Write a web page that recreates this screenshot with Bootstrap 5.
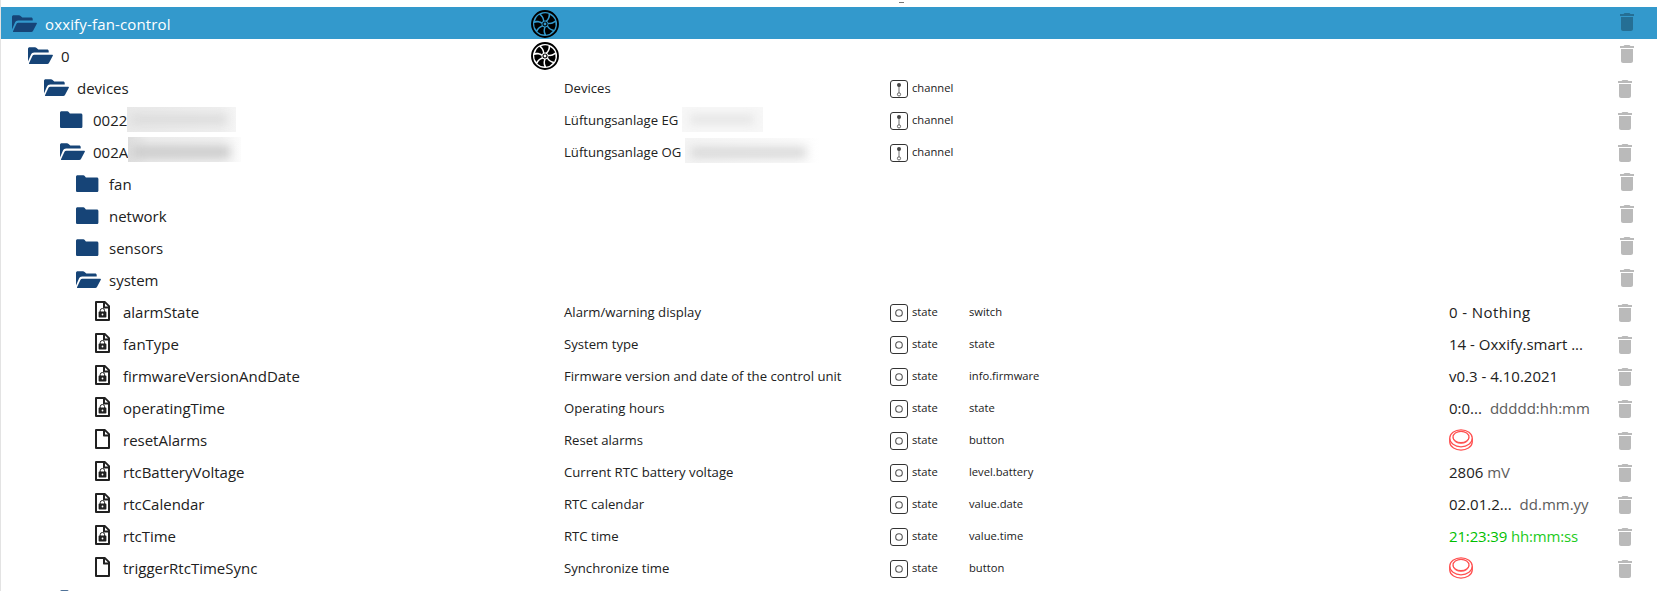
<!DOCTYPE html>
<html lang="en">
<head>
<meta charset="utf-8">
<meta name="viewport" content="width=device-width, initial-scale=1">
<title>Objects</title>
<link href="https://cdn.jsdelivr.net/npm/bootstrap@5.3.0/dist/css/bootstrap.min.css" rel="stylesheet">
<style>
  body { font-family: "Open Sans", "Noto Sans", sans-serif; color: #212121; background: #fff; overflow: hidden; }
  .tree { height: 591px; border-left: 1px solid #e3e3e3; }
  .tree-top { height: 7px; padding: 2px 0 0 898px; }
  .tree-top span { width: 5px; height: 1px; background: #777; }
  .item { height: 32px; line-height: 34px; white-space: nowrap; }
  .item.selected { background: #3399cc; color: #fff; }
  .selected .c-name { letter-spacing: .15px; }
  .item svg { flex: none; display: block; }
  .c-name { width: 530px; font-size: 15px; }
  .c-icon { width: 33px; color: #000; }
  .c-desc { width: 326px; font-size: 13.15px; }
  .c-type { width: 79px; font-size: 11.2px; line-height: 33px; }
  .c-role { width: 480px; font-size: 11.2px; line-height: 33px; }
  .c-value { width: 163px; font-size: 15px; }
  .v-wide { letter-spacing: .4px; }
  .unit { color: #5c5c5c; }
  .fresh, .fresh .unit { color: #00c000; letter-spacing: -.15px; }
  .fresh .unit { color: #22cb22; }
  .lv0 { padding-left: 10px; } .lv1 { padding-left: 26px; } .lv2 { padding-left: 42px; }
  .lv3 { padding-left: 58px; } .lv4 { padding-left: 74px; }
  .lv5 { padding-left: 94px; }
  .folder { width: 26px; height: 18px; margin: 8px 8px 0 0; color: #164477; }
  .doc { width: 15px; height: 20px; margin: 6px 13px 0 0; }
  .fan { width: 28px; height: 28px; margin-top: 3px; }
  .kind { width: 18px; height: 18px; margin: 9px 4px 0 0; }
  .push { width: 24px; height: 22px; margin-top: 6px; }
  .bin { width: 24px; height: 24px; margin: 3px 0 0 3px; color: rgba(0,0,0,.27); }
  .bin.obj { margin: 6px 0 0 1px; }
  .redact { height: 25px; overflow: hidden; }
  .redact i { display: block; filter: blur(5px); }
  .r1 { width: 109px; margin-top: 4px; background: linear-gradient(90deg, #e9e9e9, #efefef 85%, #f5f5f5); }
  .r1 i { width: 96px; height: 9px; margin: 8px 0 0 4px; background: #dadada; }
  .r2 { width: 113px; margin-top: 2px; background: linear-gradient(90deg, #dedede, #ececec 20%, #f0f0f0 80%, #fcfcfc); }
  .r2 i { width: 98px; height: 12px; margin: 9px 0 0 4px; background: #cccccc; }
  .r3 { width: 81px; margin: 4px 0 0 4px; background: #f7f7f7; }
  .r3 i { width: 64px; height: 9px; margin: 8px 0 0 8px; background: #e4e4e4; }
  .r4 { width: 135px; margin: 3px 0 0 4px; background: linear-gradient(90deg, #f4f4f4, #fafafa 80%, #fff); }
  .r4 i { width: 115px; height: 11px; margin: 9px 0 0 6px; background: #d9d9d9; }
</style>
</head>
<body>
<svg class="d-none" xmlns="http://www.w3.org/2000/svg">
  <symbol id="closed" viewBox="0 0 26 18"><path fill="currentColor" d="M2.600.2h5.700c.7 0 1 .2 1.400.7l1.200 1.500h10.900c1 0 1.600.6 1.600 1.600v11.400c0 1-.6 1.600-1.600 1.600H2.600c-1 0-1.600-.6-1.600-1.600V1.800C1 .8 1.600.2 2.600.2z"/></symbol>
  <symbol id="open" viewBox="0 0 26 18"><path fill="currentColor" d="M2.700.2h5.200c.7 0 1.200.2 1.700.7l1.700 1.600h8.700c1.100 0 1.700.6 1.700 1.600v1.500H7.100c-1.500 0-2.500.7-3.100 2L1 14.400V1.800C1 .8 1.700.2 2.700.2z"/><path fill="currentColor" d="M7.300 7.700h18c.6 0 .8.400.5 1l-3.700 7.100c-.4.8-1 1.200-1.900 1.200H2.700c-.6 0-.9-.4-.6-1l3.400-7.200c.4-.7 1-1.100 1.800-1.100z"/></symbol>
  <symbol id="file" viewBox="0 0 15 20"><path fill="none" stroke="currentColor" stroke-width="2" stroke-linejoin="round" d="M1 1h8.700L14 5.300V19H1z"/><path fill="currentColor" d="M8 1H10l4.500 4.500v1.900H9c-.6 0-1-.4-1-1z"/><path fill="#fff" d="M10 2.400v3.100h3.100z"/></symbol>
  <symbol id="locked" viewBox="0 0 15 20"><use href="#file"/><path fill="none" stroke="currentColor" stroke-width="1" d="M5.200 11V9.700a2.200 2.200 0 0 1 4.400 0V11"/><rect x="3.600" y="10.600" width="7.800" height="6" rx=".8" fill="currentColor"/><circle cx="7.500" cy="13.500" r=".9" fill="#fff"/></symbol>
  <symbol id="rotor" viewBox="-14 -14 28 28"><circle r="13" fill="none" stroke="currentColor" stroke-width="1.900"/>
    <g fill="currentColor"><path id="blade" d="M-.7-3.500C-.9-5.800-1.900-7.900-3.900-9.700Q-.2-11.500 3.500-10.300C3.800-7.600 2.900-5 1-3.400z"/>
    <use href="#blade" transform="rotate(51.430)"/><use href="#blade" transform="rotate(102.860)"/><use href="#blade" transform="rotate(154.290)"/><use href="#blade" transform="rotate(205.710)"/><use href="#blade" transform="rotate(257.140)"/><use href="#blade" transform="rotate(308.570)"/></g>
    <circle r="2" fill="none" stroke="currentColor" stroke-width="1.200"/></symbol>
  <symbol id="channel" viewBox="0 0 18 18"><rect x=".5" y=".5" width="17" height="17" rx="2.500" fill="none" stroke="#333"/><path stroke="#888" stroke-width="1.200" d="M9 5v8"/><circle cx="9" cy="4.900" r="2" fill="#444"/><circle cx="9" cy="14.400" r="1.600" fill="#fff" stroke="#666"/></symbol>
  <symbol id="state" viewBox="0 0 18 18"><rect x=".5" y=".5" width="17" height="17" rx="2.500" fill="none" stroke="#333"/><circle cx="9" cy="9" r="3.300" fill="none" stroke="#555" stroke-width="1.100"/></symbol>
  <symbol id="button" viewBox="0 0 24 22"><g fill="none" stroke="#ff5050" stroke-width="1.200"><ellipse cx="12" cy="9.300" rx="11.300" ry="8.500"/><ellipse cx="12" cy="8" rx="8" ry="5.700"/><path d="M.7 9.300v3.800c1.200 10.600 21.400 10.600 22.600 0V9.300M4 8.500c1 7.600 15 7.600 16 0"/></g></symbol>
  <symbol id="trash" viewBox="0 0 24 24"><path fill="currentColor" d="M6 19c0 1.100.9 2 2 2h8c1.100 0 2-.9 2-2V7H6v12zM19 4h-3.500l-1-1h-5l-1 1H5v2h14V4z"/></symbol>
</svg>

<main class="tree">
  <div class="tree-top"><span class="d-block"></span></div>

  <div class="item selected d-flex"><div class="c-name lv0 d-flex"><svg class="folder"><use href="#open"/></svg>oxxify-fan-control</div><div class="c-icon"><svg class="fan"><use href="#rotor"/></svg></div><div class="c-desc"></div><div class="c-type"></div><div class="c-role"></div><div class="c-value"></div><svg class="bin"><use href="#trash"/></svg></div>
  <div class="item d-flex"><div class="c-name lv1 d-flex"><svg class="folder"><use href="#open"/></svg>0</div><div class="c-icon"><svg class="fan"><use href="#rotor"/></svg></div><div class="c-desc"></div><div class="c-type"></div><div class="c-role"></div><div class="c-value"></div><svg class="bin"><use href="#trash"/></svg></div>
  <div class="item d-flex"><div class="c-name lv2 d-flex"><svg class="folder"><use href="#open"/></svg>devices</div><div class="c-icon"></div><div class="c-desc">Devices</div><div class="c-type d-flex"><svg class="kind"><use href="#channel"/></svg>channel</div><div class="c-role"></div><div class="c-value"></div><svg class="bin obj"><use href="#trash"/></svg></div>
  <div class="item d-flex"><div class="c-name lv3 d-flex"><svg class="folder"><use href="#closed"/></svg>0022<span class="redact r1"><i></i></span></div><div class="c-icon"></div><div class="c-desc d-flex">Lüftungsanlage EG<span class="redact r3"><i></i></span></div><div class="c-type d-flex"><svg class="kind"><use href="#channel"/></svg>channel</div><div class="c-role"></div><div class="c-value"></div><svg class="bin obj"><use href="#trash"/></svg></div>
  <div class="item d-flex"><div class="c-name lv3 d-flex"><svg class="folder"><use href="#open"/></svg>002A<span class="redact r2"><i></i></span></div><div class="c-icon"></div><div class="c-desc d-flex">Lüftungsanlage OG<span class="redact r4"><i></i></span></div><div class="c-type d-flex"><svg class="kind"><use href="#channel"/></svg>channel</div><div class="c-role"></div><div class="c-value"></div><svg class="bin obj"><use href="#trash"/></svg></div>
  <div class="item d-flex"><div class="c-name lv4 d-flex"><svg class="folder"><use href="#closed"/></svg>fan</div><div class="c-icon"></div><div class="c-desc"></div><div class="c-type"></div><div class="c-role"></div><div class="c-value"></div><svg class="bin"><use href="#trash"/></svg></div>
  <div class="item d-flex"><div class="c-name lv4 d-flex"><svg class="folder"><use href="#closed"/></svg>network</div><div class="c-icon"></div><div class="c-desc"></div><div class="c-type"></div><div class="c-role"></div><div class="c-value"></div><svg class="bin"><use href="#trash"/></svg></div>
  <div class="item d-flex"><div class="c-name lv4 d-flex"><svg class="folder"><use href="#closed"/></svg>sensors</div><div class="c-icon"></div><div class="c-desc"></div><div class="c-type"></div><div class="c-role"></div><div class="c-value"></div><svg class="bin"><use href="#trash"/></svg></div>
  <div class="item d-flex"><div class="c-name lv4 d-flex"><svg class="folder"><use href="#open"/></svg>system</div><div class="c-icon"></div><div class="c-desc"></div><div class="c-type"></div><div class="c-role"></div><div class="c-value"></div><svg class="bin"><use href="#trash"/></svg></div>

  <div class="item d-flex"><div class="c-name lv5 d-flex"><svg class="doc"><use href="#locked"/></svg>alarmState</div><div class="c-icon"></div><div class="c-desc">Alarm/warning display</div><div class="c-type d-flex"><svg class="kind"><use href="#state"/></svg>state</div><div class="c-role">switch</div><div class="c-value v-wide">0 - Nothing</div><svg class="bin obj"><use href="#trash"/></svg></div>
  <div class="item d-flex"><div class="c-name lv5 d-flex"><svg class="doc"><use href="#locked"/></svg>fanType</div><div class="c-icon"></div><div class="c-desc">System type</div><div class="c-type d-flex"><svg class="kind"><use href="#state"/></svg>state</div><div class="c-role">state</div><div class="c-value">14 - Oxxify.smart ...</div><svg class="bin obj"><use href="#trash"/></svg></div>
  <div class="item d-flex"><div class="c-name lv5 d-flex"><svg class="doc"><use href="#locked"/></svg>firmwareVersionAndDate</div><div class="c-icon"></div><div class="c-desc">Firmware version and date of the control unit</div><div class="c-type d-flex"><svg class="kind"><use href="#state"/></svg>state</div><div class="c-role">info.firmware</div><div class="c-value">v0.3 - 4.10.2021</div><svg class="bin obj"><use href="#trash"/></svg></div>
  <div class="item d-flex"><div class="c-name lv5 d-flex"><svg class="doc"><use href="#locked"/></svg>operatingTime</div><div class="c-icon"></div><div class="c-desc">Operating hours</div><div class="c-type d-flex"><svg class="kind"><use href="#state"/></svg>state</div><div class="c-role">state</div><div class="c-value d-flex gap-2">0:0...<span class="unit">ddddd:hh:mm</span></div><svg class="bin obj"><use href="#trash"/></svg></div>
  <div class="item d-flex"><div class="c-name lv5 d-flex"><svg class="doc"><use href="#file"/></svg>resetAlarms</div><div class="c-icon"></div><div class="c-desc">Reset alarms</div><div class="c-type d-flex"><svg class="kind"><use href="#state"/></svg>state</div><div class="c-role">button</div><div class="c-value"><svg class="push"><use href="#button"/></svg></div><svg class="bin obj"><use href="#trash"/></svg></div>
  <div class="item d-flex"><div class="c-name lv5 d-flex"><svg class="doc"><use href="#locked"/></svg>rtcBatteryVoltage</div><div class="c-icon"></div><div class="c-desc">Current RTC battery voltage</div><div class="c-type d-flex"><svg class="kind"><use href="#state"/></svg>state</div><div class="c-role">level.battery</div><div class="c-value">2806 <span class="unit">mV</span></div><svg class="bin obj"><use href="#trash"/></svg></div>
  <div class="item d-flex"><div class="c-name lv5 d-flex"><svg class="doc"><use href="#locked"/></svg>rtcCalendar</div><div class="c-icon"></div><div class="c-desc">RTC calendar</div><div class="c-type d-flex"><svg class="kind"><use href="#state"/></svg>state</div><div class="c-role">value.date</div><div class="c-value d-flex gap-2">02.01.2...<span class="unit">dd.mm.yy</span></div><svg class="bin obj"><use href="#trash"/></svg></div>
  <div class="item d-flex"><div class="c-name lv5 d-flex"><svg class="doc"><use href="#locked"/></svg>rtcTime</div><div class="c-icon"></div><div class="c-desc">RTC time</div><div class="c-type d-flex"><svg class="kind"><use href="#state"/></svg>state</div><div class="c-role">value.time</div><div class="c-value fresh">21:23:39 <span class="unit">hh:mm:ss</span></div><svg class="bin obj"><use href="#trash"/></svg></div>
  <div class="item d-flex"><div class="c-name lv5 d-flex"><svg class="doc"><use href="#file"/></svg>triggerRtcTimeSync</div><div class="c-icon"></div><div class="c-desc">Synchronize time</div><div class="c-type d-flex"><svg class="kind"><use href="#state"/></svg>state</div><div class="c-role">button</div><div class="c-value"><svg class="push"><use href="#button"/></svg></div><svg class="bin obj"><use href="#trash"/></svg></div>

  <div class="item d-flex"><div class="c-name lv3 d-flex"><svg class="folder" style="margin-top:7px"><use href="#closed"/></svg></div></div>
</main>
<script src="https://cdn.jsdelivr.net/npm/bootstrap@5.3.0/dist/js/bootstrap.bundle.min.js"></script>
</body>
</html>
